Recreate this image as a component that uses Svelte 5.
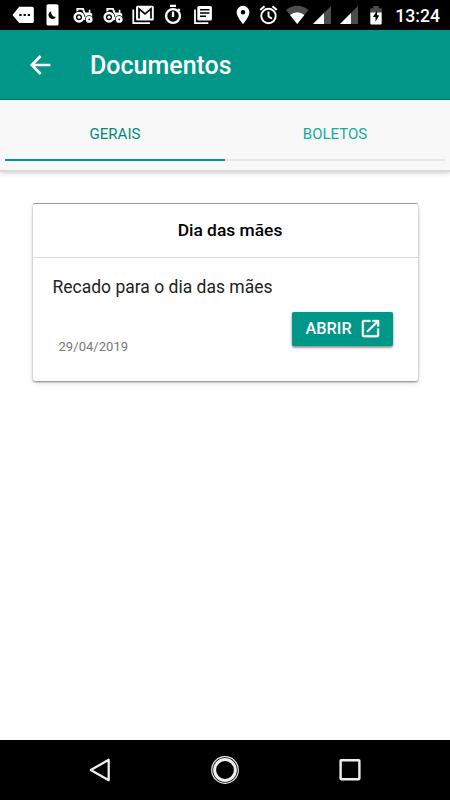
<script lang="ts">
  interface Tab {
    id: string;
    label: string;
  }

  interface Doc {
    title: string;
    message: string;
    date: string;
  }

  const tabs: Tab[] = [
    { id: 'gerais', label: 'GERAIS' },
    { id: 'boletos', label: 'BOLETOS' }
  ];

  const docs: Doc[] = [
    { title: 'Dia das mães', message: 'Recado para o dia das mães', date: '29/04/2019' }
  ];

  let active = $state('gerais');
</script>

{#snippet tractor()}
  <svg class="status-icon" viewBox="0 0 22 22">
    <path d="M4.4 8V4H11.6L13.4 8.6H16.8V5.8H18.4V8.8L20.2 9.8V13H14L12 15.5 8 9Z" fill="#fff" />
    <path d="M6.4 5.8H10.3L11.4 9 6.4 8Z" fill="#000" />
    <circle cx="7" cy="13.2" r="6.2" fill="#000" />
    <circle cx="7" cy="13.2" r="4.3" fill="none" stroke="#fff" stroke-width="2.5" />
    <circle cx="7" cy="13.2" r="1.6" fill="#fff" />
    <path d="M12 13H15V16H12Z" fill="#fff" />
    <circle cx="17.2" cy="15.4" r="4.2" fill="#000" />
    <circle cx="17.2" cy="15.4" r="2.2" fill="none" stroke="#fff" stroke-width="2.5" />
  </svg>
{/snippet}

{#snippet signal()}
  <svg class="status-icon" viewBox="0 0 22 22">
    <path d="M20 2V20H2Z" fill="#4d4d4d" />
    <path d="M13 9V20H2Z" fill="#fff" />
  </svg>
{/snippet}

<div class="screen">
  <div class="status-bar">
    <div class="notifications">
      <svg class="status-icon" viewBox="0 0 22 22">
        <path d="M7.2 2.8H20.2Q21.8 2.8 21.8 4.4V17.4Q21.8 19 20.2 19H7.2L.5 10.9Z" fill="#fff" />
        <path d="M7.4 10H9.6V12H7.4ZM11.6 10H13.8V12H11.6ZM15.8 10H18V12H15.8Z" fill="#000" />
      </svg>
      <svg class="status-icon" viewBox="0 0 22 22">
        <rect x="4.5" y="0.2" width="12" height="21.3" rx="1.6" fill="#fff" />
        <path d="M9.2 7.2A4 4 0 1 0 13.9 13 4.7 4.7 0 0 1 9.2 7.2Z" fill="#000" />
      </svg>
      {@render tractor()}
      {@render tractor()}
      <svg class="status-icon" viewBox="0 0 22 22">
        <path d="M1.3 5.5V19.2H18" fill="none" stroke="#fff" stroke-width="1.8" />
        <rect x="4" y="1.8" width="17.8" height="14.8" rx="1.6" fill="#fff" />
        <path d="M7 14.4V4.9L13 9.8 19 4.9V14.4" fill="none" stroke="#000" stroke-width="1.7" />
      </svg>
      <svg class="status-icon" viewBox="0 0 22 22" fill="none" stroke="#fff" stroke-width="2.3">
        <circle cx="11" cy="12" r="6.9" />
        <path d="M8 1.8H14M11 7.5V13M16 6.8L17.7 5.2" />
      </svg>
      <svg class="status-icon" viewBox="0 0 22 22">
        <path d="M3 5.5V19.2H16.3" fill="none" stroke="#fff" stroke-width="1.8" />
        <rect x="5.3" y="2" width="14.6" height="14.4" rx="1.5" fill="#fff" />
        <path d="M8 5.7H17.4M8 8.9H17.4M8 12.2H14" stroke="#000" stroke-width="1.5" />
      </svg>
    </div>
    <div class="system">
      <svg class="status-icon" viewBox="0 0 22 22">
        <path
          d="M11 1.8A6.4 6.4 0 0 0 4.6 8.2C4.6 13 11 20 11 20S17.4 13 17.4 8.2A6.4 6.4 0 0 0 11 1.8ZM11 10.5A2.3 2.3 0 1 1 11 5.9 2.3 2.3 0 0 1 11 10.5Z"
          fill="#fff"
        />
      </svg>
      <svg class="status-icon" viewBox="0 0 22 22" fill="none" stroke="#fff" stroke-width="2">
        <circle cx="10.5" cy="12" r="7.2" />
        <path d="M10.5 7.5V12.5L14 14.6M2.2 6L6.5 2.3M14.5 2.3L18.8 6" />
      </svg>
      <svg class="status-icon" viewBox="0 0 22 22">
        <path d="M1 6Q12.2-2.3 23.4 6L12.2 20Z" fill="#4d4d4d" />
        <path d="M5 11Q12.2 5.3 19.4 11L12.2 20Z" fill="#fff" />
      </svg>
      {@render signal()}
      {@render signal()}
      <svg class="status-icon" viewBox="0 0 22 22">
        <path d="M6.3 4.2H9.3V2H14.7V4.2H17.7V9H6.3Z" fill="#4d4d4d" />
        <path d="M6.3 8.5H17.7V19.5Q17.7 20.5 16.7 20.5H7.3Q6.3 20.5 6.3 19.5Z" fill="#fff" />
        <path d="M13 6.4L9 13H11.5V17.8L15.2 11.2H13Z" fill="#000" />
      </svg>
    </div>
    <span class="clock">13:24</span>
  </div>

  <header class="toolbar">
    <button class="back" aria-label="Voltar">
      <svg viewBox="0 0 22 22" fill="none" stroke="#fff" stroke-width="2.7">
        <path d="M21.4 11H3M11.6 2L2.8 11 11.6 20" />
      </svg>
    </button>
    <h1>Documentos</h1>
  </header>

  <nav class="tabs">
    {#each tabs as tab (tab.id)}
      <button class="tab" class:active={active === tab.id} onclick={() => (active = tab.id)}>
        {tab.label}
      </button>
    {/each}
  </nav>

  <main>
    {#each docs as doc}
      <article class="card">
        <h2>{doc.title}</h2>
        <div class="card-body">
          <p>{doc.message}</p>
          <div class="card-footer">
            <span class="date">{doc.date}</span>
            <button class="open">
              ABRIR
              <svg viewBox="0 0 24 24" fill="#fff" stroke="#fff" stroke-width="0.3">
                <path
                  d="M19 19H5V5h7V3H5a2 2 0 0 0-2 2v14a2 2 0 0 0 2 2h14a2 2 0 0 0 2-2v-7h-2v7zM14 3v2h3.59l-9.83 9.83 1.41 1.41L19 6.41V10h2V3h-7z"
                />
              </svg>
            </button>
          </div>
        </div>
      </article>
    {/each}
  </main>

  <div class="nav-bar">
    <svg viewBox="0 0 30 30" fill="none" stroke="#eee" stroke-width="2.3">
      <path d="M5.8 15L23.7 4.8V25.2Z" stroke-linejoin="round" />
    </svg>
    <svg viewBox="0 0 30 30" fill="none" stroke="#eee">
      <circle cx="15" cy="15" r="13.3" stroke-width="1.2" />
      <circle cx="15" cy="15" r="10.4" stroke-width="3" />
    </svg>
    <svg viewBox="0 0 30 30" fill="none" stroke="#eee" stroke-width="2.4">
      <rect x="5.6" y="5.2" width="18.8" height="19" rx="0.6" />
    </svg>
  </div>
</div>

<style>
  :global(body) {
    margin: 0;
  }

  .screen {
    display: flex;
    flex-direction: column;
    width: 450px;
    height: 800px;
    overflow: hidden;
    background: #fff;
    font-family: Roboto, sans-serif;
  }

  button {
    border: 0;
    padding: 0;
    background: none;
    font-family: inherit;
  }

  .status-bar {
    display: flex;
    align-items: center;
    box-sizing: border-box;
    height: 30px;
    padding: 0 10px 0 11.5px;
    background: #000;
    flex-shrink: 0;
  }

  .notifications,
  .system {
    display: flex;
    gap: 8px;
  }

  .system {
    gap: 4.5px;
    margin-left: 18px;
  }

  .status-icon {
    width: 22px;
    height: 22px;
    overflow: visible;
  }

  .clock {
    margin-left: auto;
    padding-top: 1px;
    color: #fff;
    font-size: 17.6px;
    font-weight: 500;
    line-height: 30px;
  }

  .toolbar {
    display: flex;
    align-items: center;
    box-sizing: border-box;
    height: 70px;
    padding-left: 29px;
    background: #009688;
    border-bottom: 1px solid #00796d;
    flex-shrink: 0;
  }

  .back {
    display: flex;
  }

  .back svg {
    width: 22px;
    height: 22px;
  }

  h1 {
    margin: 1px 0 0 39px;
    color: #fff;
    font-size: 25px;
    font-weight: 500;
  }

  .tabs {
    display: flex;
    box-sizing: border-box;
    height: 70px;
    padding: 0 5px 9px;
    background: #f8f8f8;
    box-shadow: 0 2px 0 #d9d9d9, 0 3px 5px rgba(0, 0, 0, 0.2);
    flex-shrink: 0;
  }

  .tab {
    flex: 1;
    padding-top: 8px;
    border-bottom: 2px solid #e6e6e6;
    color: #1aa99c;
    font-size: 15px;
  }

  .tab.active {
    border-bottom-color: #009688;
    color: #00897b;
  }

  main {
    flex: 1;
    padding: 34px 32.5px 0;
  }

  .card {
    border-radius: 2px;
    background: #fff;
    box-shadow: 0 -1px 0 #999, 0 1px 2px rgba(0, 0, 0, 0.45), 0 2px 6px rgba(0, 0, 0, 0.12);
  }

  h2 {
    margin: 0;
    padding-left: 10px;
    border-bottom: 1px solid #dadada;
    color: #000;
    font-size: 17.4px;
    font-weight: 500;
    line-height: 53px;
    text-align: center;
  }

  .card-body {
    box-sizing: border-box;
    height: 123px;
    padding: 18px 25px 0 20px;
  }

  p {
    margin: 0;
    color: #222;
    font-size: 17.5px;
    line-height: 22px;
  }

  .card-footer {
    display: flex;
    align-items: flex-start;
    justify-content: space-between;
    padding: 14px 0 0 6px;
  }

  .date {
    margin-top: 26px;
    color: #777;
    font-size: 13px;
    letter-spacing: 0.05px;
    line-height: 18px;
  }

  .open {
    display: flex;
    align-items: center;
    justify-content: space-between;
    width: 101px;
    height: 34px;
    padding: 0 11px 1px 14px;
    border-radius: 2px;
    background: #009688;
    box-shadow: 0 2px 2px rgba(0, 0, 0, 0.25), 0 1px 3px rgba(0, 0, 0, 0.3);
    color: #fff;
    font-size: 16.3px;
    font-weight: 500;
  }

  .open svg {
    width: 23px;
    height: 23px;
  }

  .nav-bar {
    display: flex;
    justify-content: space-between;
    align-items: center;
    height: 60px;
    padding: 0 85px;
    background: #000;
    flex-shrink: 0;
  }

  .nav-bar svg {
    width: 30px;
    height: 30px;
  }
</style>
